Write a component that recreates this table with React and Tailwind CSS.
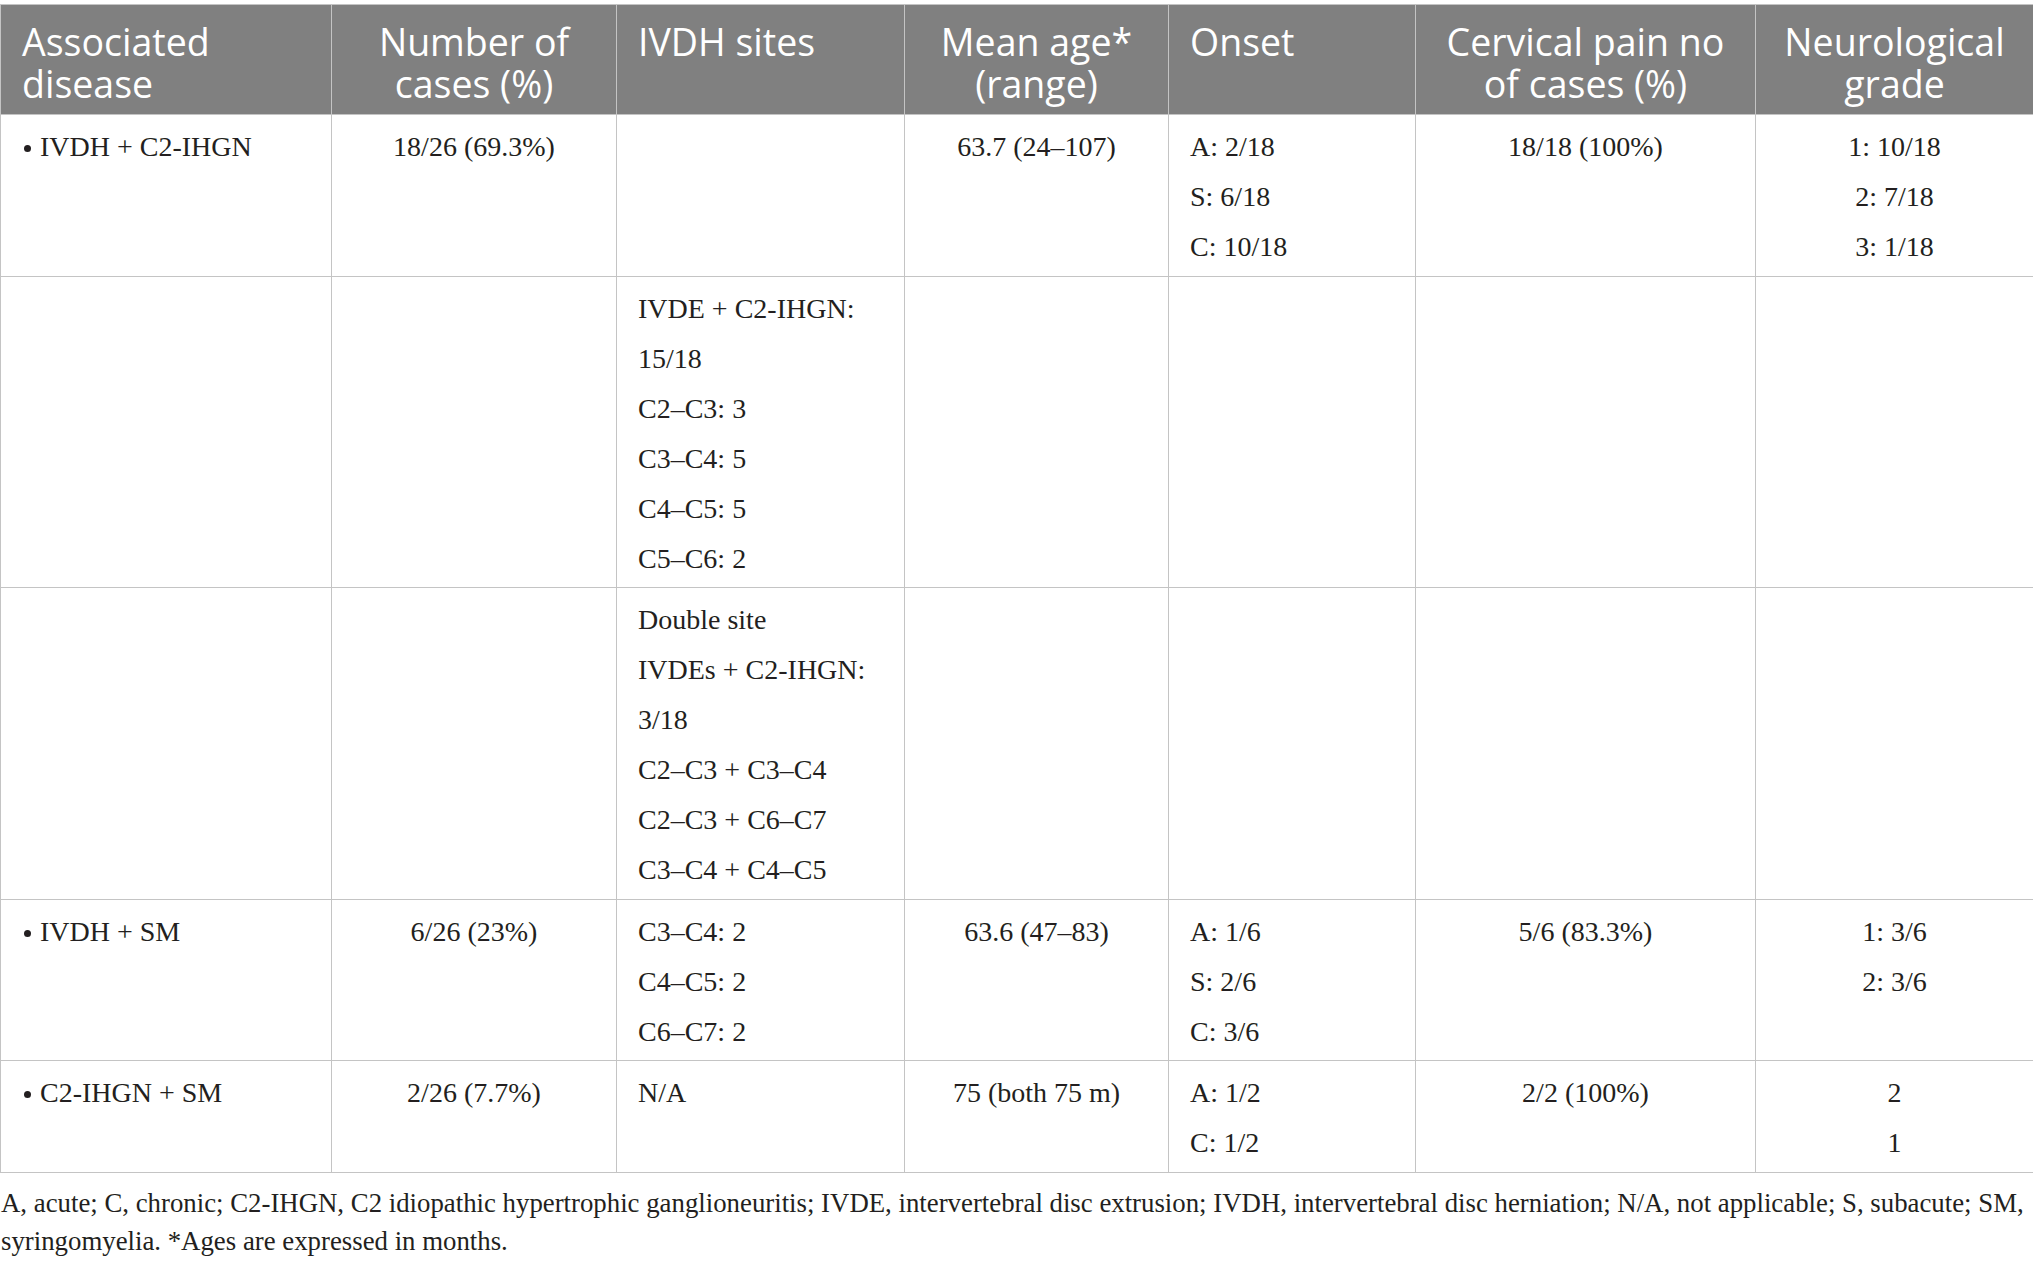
import React from "react";

const rows = [
  [
    ["• IVDH + C2-IHGN"],
    ["18/26 (69.3%)"],
    [],
    ["63.7 (24–107)"],
    ["A: 2/18", "S: 6/18", "C: 10/18"],
    ["18/18 (100%)"],
    ["1: 10/18", "2: 7/18", "3: 1/18"],
  ],
  [
    [],
    [],
    ["IVDE + C2-IHGN:", "15/18", "C2–C3: 3", "C3–C4: 5", "C4–C5: 5", "C5–C6: 2"],
    [],
    [],
    [],
    [],
  ],
  [
    [],
    [],
    ["Double site", "IVDEs + C2-IHGN:", "3/18", "C2–C3 + C3–C4", "C2–C3 + C6–C7", "C3–C4 + C4–C5"],
    [],
    [],
    [],
    [],
  ],
  [
    ["• IVDH + SM"],
    ["6/26 (23%)"],
    ["C3–C4: 2", "C4–C5: 2", "C6–C7: 2"],
    ["63.6 (47–83)"],
    ["A: 1/6", "S: 2/6", "C: 3/6"],
    ["5/6 (83.3%)"],
    ["1: 3/6", "2: 3/6"],
  ],
  [
    ["• C2-IHGN + SM"],
    ["2/26 (7.7%)"],
    ["N/A"],
    ["75 (both 75 m)"],
    ["A: 1/2", "C: 1/2"],
    ["2/2 (100%)"],
    ["2", "1"],
  ],
];

const headers = [
  ["Associated", "disease"],
  ["Number of", "cases (%)"],
  ["IVDH sites"],
  ["Mean age*", "(range)"],
  ["Onset"],
  ["Cervical pain no", "of cases (%)"],
  ["Neurological", "grade"],
];

const centered = [false, true, false, true, false, true, true];

function Line({ text }) {
  if (text.startsWith("• ")) {
    return (
      <div className="whitespace-nowrap">
        <span className="inline-block w-[7px] h-[7px] rounded-full bg-[#231f20] mb-[4px] ml-[2px] mr-[9px]" aria-label="•" />
        {text.slice(2)}
      </div>
    );
  }
  return <div className="whitespace-nowrap">{text}</div>;
}

export default function App() {
  return (
    <div className="w-[2033px] min-h-[1263px] bg-white pt-[4px]">
      <table className="w-[2033px] table-fixed border-collapse">
        <colgroup>
          <col className="w-[331px]" />
          <col className="w-[285px]" />
          <col className="w-[288px]" />
          <col className="w-[264px]" />
          <col className="w-[247px]" />
          <col className="w-[340px]" />
          <col className="w-[278px]" />
        </colgroup>
        <thead>
          <tr>
            {headers.map((h, i) => (
              <th
                key={i}
                className={
                  "bg-[#808080] text-white font-['Open_Sans',sans-serif] text-[37.5px] leading-[42px] font-normal px-[21px] pt-[16px] pb-[9px] align-top border border-[#c4c4c4] " +
                  (centered[i] ? "text-center" : "text-left")
                }
              >
                {h.map((l, j) => (
                  <div key={j} className="whitespace-nowrap">
                    {l}
                  </div>
                ))}
              </th>
            ))}
          </tr>
        </thead>
        <tbody>
          {rows.map((r, ri) => (
            <tr key={ri}>
              {r.map((cell, ci) => (
                <td
                  key={ci}
                  className={
                    "font-['Liberation_Serif','Times_New_Roman',serif] text-[28px] leading-[50px] text-[#231f20] px-[21px] pt-[7px] pb-[3.5px] align-top border border-[#c4c4c4] " +
                    (centered[ci] ? "text-center" : "text-left")
                  }
                >
                  {cell.map((l, j) => (
                    <Line key={j} text={l} />
                  ))}
                </td>
              ))}
            </tr>
          ))}
        </tbody>
      </table>
      <div className="mt-[11px] pl-[1px] font-['Liberation_Serif','Times_New_Roman',serif] text-[26.8px] leading-[38px] text-[#231f20]">
        <div className="whitespace-nowrap">
          A, acute; C, chronic; C2-IHGN, C2 idiopathic hypertrophic ganglioneuritis; IVDE, intervertebral disc extrusion; IVDH, intervertebral disc herniation; N/A, not applicable; S, subacute; SM,
        </div>
        <div className="whitespace-nowrap">syringomyelia. *Ages are expressed in months.</div>
      </div>
    </div>
  );
}
